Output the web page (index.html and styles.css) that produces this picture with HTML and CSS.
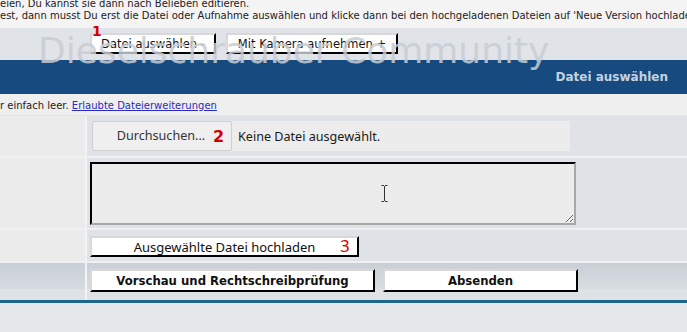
FILE: index.html
```html
<!DOCTYPE html>
<html lang="de">
<head>
    <meta charset="UTF-8">
    <title>Datei auswählen - Dieselschrauber Community</title>
    <link rel="stylesheet" href="styles.css">
</head>
<body>
    <div class="intro">
        <p class="first">eien, Du kannst sie dann nach Belieben editieren.</p>
        <p>est, dann musst Du erst die Datei oder Aufnahme auswählen und klicke dann bei den hochgeladenen Dateien auf 'Neue Version hochladen'.</p>
    </div>

    <div class="brand">
        <span class="watermark">Dieselschrauber Community</span>
        <div class="choice">
            <span class="num num1">1</span>
            <button class="btn btn-file">Datei auswählen -</button>
            <button class="btn btn-cam">Mit Kamera aufnehmen +</button>
        </div>
    </div>

    <div class="cat">Datei auswählen</div>

    <div class="hint">r einfach leer. <a href="#">Erlaubte Dateierweiterungen</a></div>

    <div class="form">
        <div class="row row-file">
            <div class="label"></div>
            <div class="field">
                <div class="file">
                    <span class="browse">Durchsuchen...</span>
                    <span class="num num2">2</span>
                    <span class="nofile">Keine Datei ausgewählt.</span>
                </div>
            </div>
        </div>
        <div class="row row-text">
            <div class="label"></div>
            <div class="field">
                <div class="area">
                    <textarea readonly></textarea>
                    <svg class="ibeam" width="7" height="17" viewBox="0 0 7 17">
                        <path d="M0.5 0.5h2.5M4 0.5h2.5M3.5 1v15M0.5 16.5h2.5M4 16.5h2.5" stroke="#333" stroke-width="1" fill="none"/>
                    </svg>
                </div>
            </div>
        </div>
        <div class="row row-upload">
            <div class="label"></div>
            <div class="field">
                <button class="btn btn-upload">Ausgewählte Datei hochladen</button>
                <span class="num num3">3</span>
            </div>
        </div>
        <div class="row row-submit">
            <div class="label"></div>
            <div class="field">
                <button class="btn btn-bold btn-preview">Vorschau und Rechtschreibprüfung</button>
                <button class="btn btn-bold btn-send">Absenden</button>
            </div>
        </div>
    </div>
    <div class="bottom"></div>
</body>
</html>
```

FILE: styles.css
```css
body {
    margin: 0;
    background: #e5e8eb;
    font-family: "DejaVu Sans", Verdana, sans-serif;
    color: #222;
    overflow: hidden;
}
.intro {
    background: #f4f4f4;
    height: 28px;
    font-size: 10px;
    white-space: nowrap;
    overflow: hidden;
}
.intro p {
    margin: 0;
    height: 12px;
    line-height: 12px;
}
.intro .first {
    margin-top: -2px;
}
.brand {
    position: relative;
    height: 32px;
    background: #e0e3e7;
}
.watermark {
    position: absolute;
    left: 38px;
    top: 5px;
    font-size: 36px;
    line-height: 36px;
    color: rgba(200, 205, 212, 0.85);
    white-space: nowrap;
    z-index: 2;
    pointer-events: none;
}
.choice {
    position: relative;
    display: flex;
    gap: 10px;
    padding: 5px 0 0 90px;
    z-index: 1;
}
.btn {
    background: #fff;
    border: 2px solid;
    border-color: #d8d8d8 #000 #000 #d8d8d8;
    font-family: "DejaVu Sans", Verdana, sans-serif;
    font-size: 11px;
    color: #111;
    padding: 0;
    height: 21px;
}
.btn-file {
    width: 126px;
    font-size: 11.5px;
}
.btn-cam {
    width: 172px;
    font-size: 11.5px;
}
.num {
    position: absolute;
    color: #d40000;
    font-family: "DejaVu Sans", Verdana, sans-serif;
    font-weight: bold;
    z-index: 3;
}
.num1 {
    left: 92px;
    top: -5px;
    font-size: 14px;
}
.cat {
    height: 34px;
    line-height: 34px;
    background: #174a7e;
    color: #c4d2e0;
    font-size: 12px;
    font-weight: bold;
    text-align: right;
    padding-right: 19px;
}
.hint {
    height: 21px;
    line-height: 23px;
    background: #efefef;
    font-size: 10px;
    white-space: nowrap;
}
.hint a {
    color: #2b2bc4;
}
.form {
    border-top: 1px solid #e2e5e8;
}
.row {
    display: flex;
    border-bottom: 2px solid #eef0f2;
}
.label {
    width: 85px;
    background: #ebebeb;
    border-right: 2px solid #f2f3f4;
}
.field {
    position: relative;
    flex: 1;
    background: #dfe3e7;
}
.row-file .field {
    padding: 5px 0 5px 5px;
}
.file {
    display: flex;
    align-items: center;
    width: 478px;
    height: 30px;
    background: #ececec;
    font-family: "Noto Sans", sans-serif;
    font-size: 12.6px;
}
.browse {
    width: 136px;
    height: 28px;
    line-height: 28px;
    box-sizing: content-box;
    border: 1px solid #cfcfcf;
    border-radius: 2px;
    background: #efefef;
    color: #333;
    text-align: center;
    padding-right: 2px;
}
.num2 {
    position: static;
    margin-left: -19px;
    width: 19px;
    font-size: 16px;
}
.nofile {
    margin-left: 6px;
    color: #1a1a1a;
}
.row-text .field {
    padding: 4px 0 3px 3px;
}
.area {
    position: relative;
    width: 486px;
    height: 63px;
}
textarea {
    display: block;
    box-sizing: border-box;
    width: 486px;
    height: 63px;
    margin: 0;
    background: #ececec;
    border: 2px solid;
    border-color: #000 #a8a8a8 #a8a8a8 #000;
    resize: both;
}
.ibeam {
    position: absolute;
    left: 291px;
    top: 23px;
}
.row-upload .field {
    padding: 6px 0 3px 3px;
    height: 22px;
}
.btn-upload {
    width: 269px;
    font-family: "Noto Sans", sans-serif;
    font-size: 13px;
}
.num3 {
    position: absolute;
    left: 253px;
    top: 4px;
    font-weight: normal;
    font-family: "Noto Sans", sans-serif;
    font-size: 17px;
}
.row-submit {
    border-bottom: 3px solid #1d6690;
}
.row-submit .label {
    background: linear-gradient(#c9cfd6, #d6dbe0 70%, #dfe2e5 71%);
}
.row-submit .field {
    display: flex;
    gap: 8px;
    height: 23px;
    padding: 6px 0 8px 3px;
    background: linear-gradient(#c9cfd6, #d8dde1 70%, #dfe2e5 71%);
}
.btn-bold {
    font-weight: bold;
    font-size: 11.7px;
    height: 23px;
}
.btn-preview {
    width: 285px;
}
.btn-send {
    width: 195px;
}
```
